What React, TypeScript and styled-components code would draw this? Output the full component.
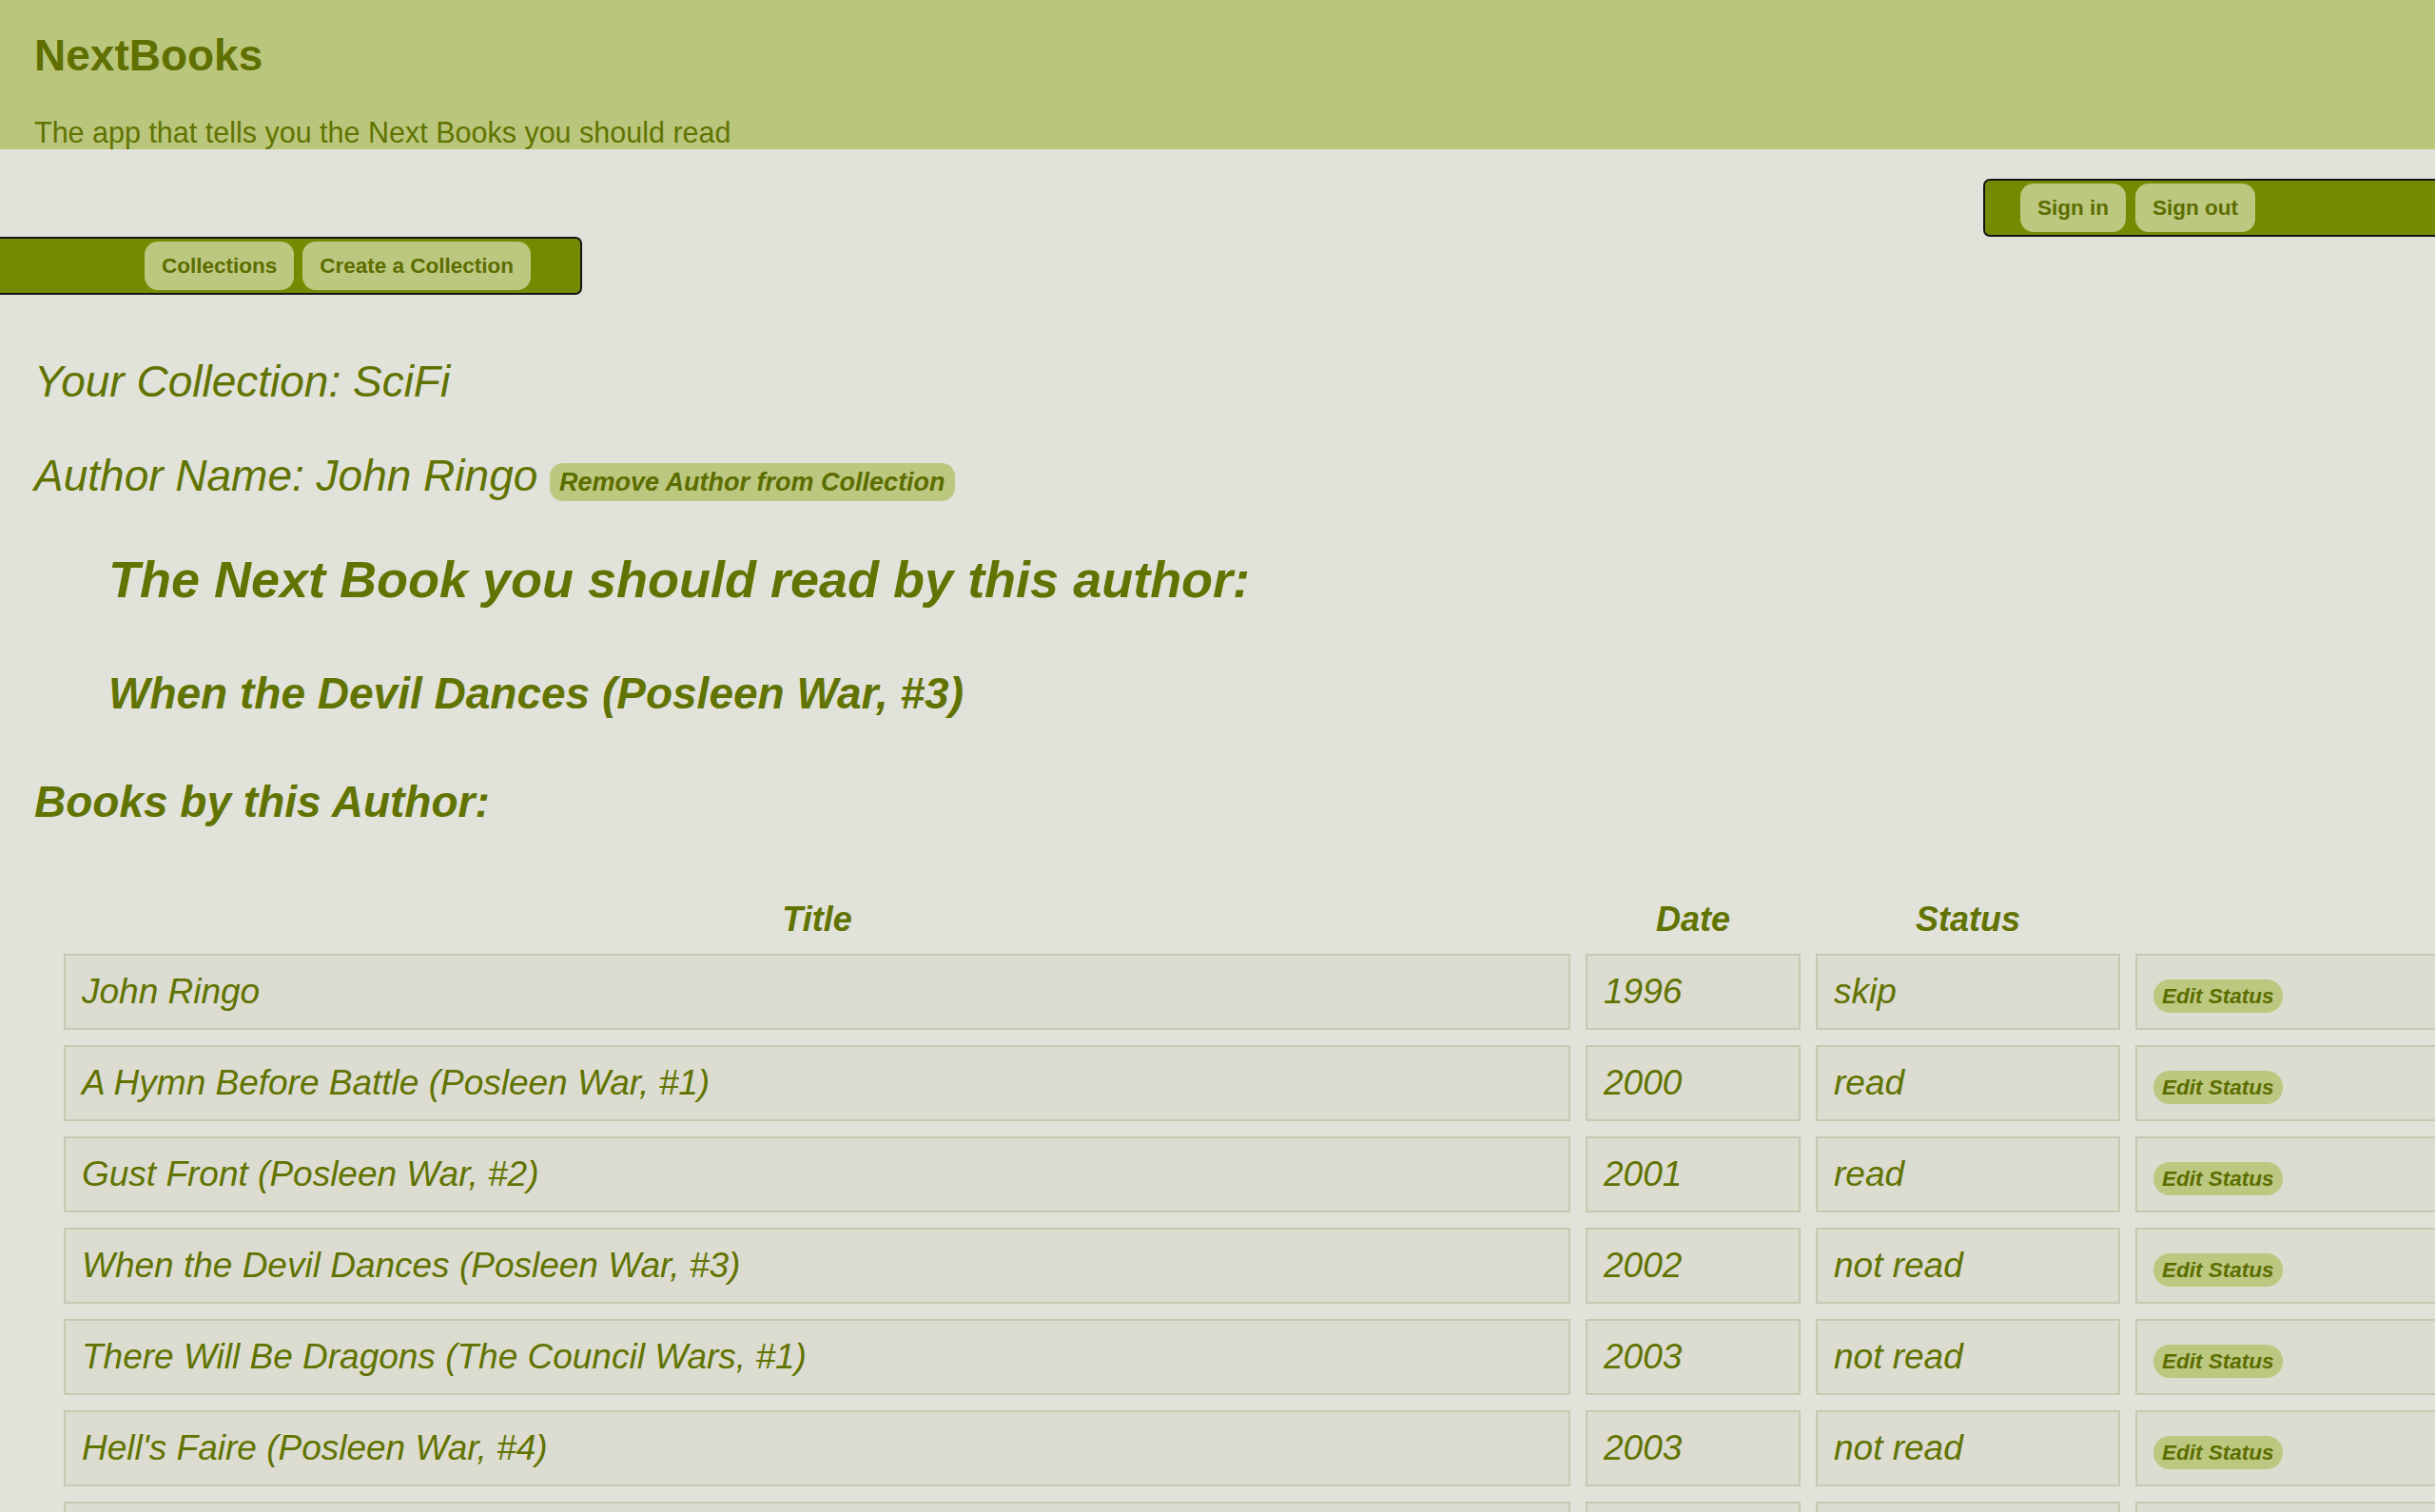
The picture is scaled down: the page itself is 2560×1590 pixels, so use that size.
import React from "react";
import styled, { createGlobalStyle } from "styled-components";

const GlobalStyle = createGlobalStyle`
  html, body {
    margin: 0;
    padding: 0;
    overflow: hidden;
    background: #e1e2da;
  }
  body {
    font-family: "Liberation Sans", Arial, Helvetica, sans-serif;
    color: #617300;
  }
  * { box-sizing: border-box; }
`;

const Page = styled.div`
  width: 2560px;
`;

const Header = styled.header`
  background: #b9c67c;
  padding: 32px 36px 1px;
`;

const Brand = styled.h1`
  margin: 0 0 38px;
  font-size: 46px;
  line-height: 52px;
  font-weight: 700;
  color: #5f7000;
`;

const Tagline = styled.p`
  margin: 0;
  font-size: 30.5px;
  line-height: 34px;
  color: #617300;
`;

const NavArea = styled.div`
  display: flex;
  flex-direction: column;
  padding-top: 31px;
`;

const NavBar = styled.nav<{ $side: "left" | "right" }>`
  display: flex;
  align-items: center;
  gap: ${(p) => (p.$side === "right" ? "10px" : "9px")};
  height: 61px;
  background: #748a00;
  border: 2px solid #151515;
  ${(p) =>
    p.$side === "right"
      ? `
    align-self: flex-end;
    width: 520px;
    margin-right: -45px;
    padding-left: 37px;
    border-radius: 7px;
  `
      : `
    align-self: flex-start;
    width: 612px;
    border-left: none;
    padding-left: 152px;
    border-radius: 0 7px 7px 0;
  `}
`;

const NavButton = styled.button`
  height: 51px;
  padding: 0 18px;
  border: none;
  border-radius: 14px;
  background: #bcc87f;
  color: #5c6d00;
  font-family: inherit;
  font-size: 22.5px;
  font-weight: 700;
  cursor: pointer;
`;

const Main = styled.main`
  padding: 0 36px;
`;

const PlainHeading = styled.h2`
  margin: 0;
  font-size: 46px;
  line-height: 53px;
  font-style: italic;
  font-weight: 400;
`;

const CollectionHeading = styled(PlainHeading)`
  margin-top: 65px;
`;

const AuthorHeading = styled(PlainHeading)`
  margin-top: 46px;
`;

const PillButton = styled.button<{ $size: "md" | "sm" }>`
  display: inline-block;
  vertical-align: baseline;
  border: none;
  background: #bcc87f;
  color: #5c6d00;
  font-family: inherit;
  font-weight: 700;
  font-style: italic;
  cursor: pointer;
  ${(p) =>
    p.$size === "md"
      ? `
    font-size: 27px;
    line-height: 30px;
    padding: 5px 10px;
    border-radius: 14px;
  `
      : `
    font-size: 22.5px;
    line-height: 25px;
    padding: 5px 9px;
    border-radius: 17px;
  `}
`;

const NextSection = styled.section`
  padding-left: 78px;
`;

const NextLabel = styled.h3`
  margin: 51px 0 0;
  font-size: 54px;
  line-height: 62px;
  font-weight: 700;
  font-style: italic;
`;

const NextTitle = styled.h4`
  margin: 63px 0 0;
  font-size: 46px;
  line-height: 53px;
  font-weight: 700;
  font-style: italic;
`;

const BooksHeading = styled.h3`
  margin: 61px 0 0;
  font-size: 46px;
  line-height: 53px;
  font-weight: 700;
  font-style: italic;
`;

const BookTable = styled.table`
  margin: 60px 0 0 15px;
  border-collapse: separate;
  border-spacing: 16px;
  table-layout: fixed;
  width: 2610px;
`;

const HeadCell = styled.th`
  padding: 0;
  font-size: 36px;
  line-height: 41px;
  font-weight: 700;
  font-style: italic;
  text-align: center;
`;

const Cell = styled.td`
  height: 80px;
  padding: 0 17px;
  background: #dcdcd0;
  border: 2px solid #c8c9b1;
  font-size: 37px;
  line-height: 42px;
  font-style: italic;
  vertical-align: middle;
  white-space: nowrap;
  overflow: hidden;
`;

const books = [
  { title: "John Ringo", date: "1996", status: "skip" },
  { title: "A Hymn Before Battle (Posleen War, #1)", date: "2000", status: "read" },
  { title: "Gust Front (Posleen War, #2)", date: "2001", status: "read" },
  { title: "When the Devil Dances (Posleen War, #3)", date: "2002", status: "not read" },
  { title: "There Will Be Dragons (The Council Wars, #1)", date: "2003", status: "not read" },
  { title: "Hell's Faire (Posleen War, #4)", date: "2003", status: "not read" },
  { title: "Emerald Sea (The Council Wars, #2)", date: "2004", status: "not read" },
];

export default function App() {
  return (
    <Page>
      <GlobalStyle />
      <Header>
        <Brand>NextBooks</Brand>
        <Tagline>The app that tells you the Next Books you should read</Tagline>
      </Header>
      <NavArea>
        <NavBar $side="right">
          <NavButton>Sign in</NavButton>
          <NavButton>Sign out</NavButton>
        </NavBar>
        <NavBar $side="left">
          <NavButton>Collections</NavButton>
          <NavButton>Create a Collection</NavButton>
        </NavBar>
      </NavArea>
      <Main>
        <CollectionHeading>Your Collection: SciFi</CollectionHeading>
        <AuthorHeading>
          Author Name: John Ringo <PillButton $size="md">Remove Author from Collection</PillButton>
        </AuthorHeading>
        <NextSection>
          <NextLabel>The Next Book you should read by this author:</NextLabel>
          <NextTitle>When the Devil Dances (Posleen War, #3)</NextTitle>
        </NextSection>
        <BooksHeading>Books by this Author:</BooksHeading>
        <BookTable>
          <colgroup>
            <col style={{ width: 1584 }} />
            <col style={{ width: 226 }} />
            <col style={{ width: 320 }} />
            <col style={{ width: 400 }} />
          </colgroup>
          <thead>
            <tr>
              <HeadCell>Title</HeadCell>
              <HeadCell>Date</HeadCell>
              <HeadCell>Status</HeadCell>
              <HeadCell />
            </tr>
          </thead>
          <tbody>
            {books.map((b, i) => (
              <tr key={i}>
                <Cell>{b.title}</Cell>
                <Cell>{b.date}</Cell>
                <Cell>{b.status}</Cell>
                <Cell>
                  <PillButton $size="sm">Edit Status</PillButton>
                </Cell>
              </tr>
            ))}
          </tbody>
        </BookTable>
      </Main>
    </Page>
  );
}
